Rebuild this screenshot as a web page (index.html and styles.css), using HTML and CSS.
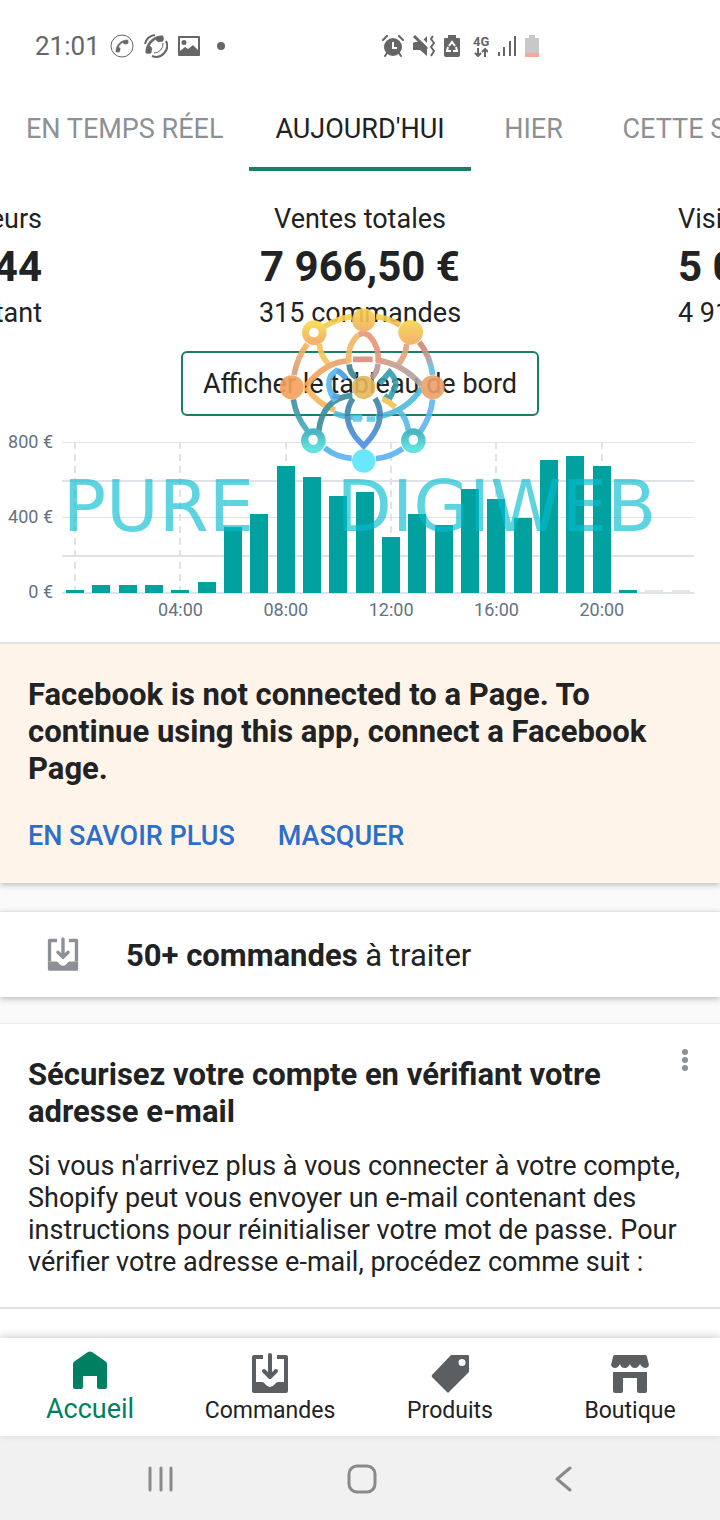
FILE: index.html
```
<!DOCTYPE html>
<html lang="fr">
<head>
<meta charset="UTF-8">
<meta name="viewport" content="width=device-width, initial-scale=1">
<title>Accueil</title>
<link rel="stylesheet" href="styles.css">
</head>
<body>

<!-- shared icons -->
<svg class="defs" width="0" height="0" aria-hidden="true">
	<symbol id="inbox" viewBox="0 0 38 40">
		<path d="M12 4H3V29M35 29V4H26" fill="none" stroke="currentColor" stroke-width="4" stroke-linejoin="round"/>
		<path d="M1 29H11Q13 29 14 31Q19 37 24 31Q25 29 27 29H37V38Q37 40 35 40H3Q1 40 1 38Z" fill="currentColor"/>
		<path d="M19 2V23M13 18L19 24L25 18" fill="none" stroke="currentColor" stroke-width="4" stroke-linecap="round" stroke-linejoin="round"/>
	</symbol>
	<symbol id="phone" viewBox="0 0 24 24">
		<path transform="rotate(90 12 12)" d="M6.62 10.79c1.44 2.83 3.76 5.14 6.59 6.59l2.2-2.2c.27-.27.67-.36 1.02-.24 1.12.37 2.33.57 3.57.57.55 0 1 .45 1 1V20c0 .55-.45 1-1 1-9.39 0-17-7.61-17-17 0-.55.45-1 1-1h3.5c.55 0 1 .45 1 1 0 1.25.2 2.45.57 3.57.11.35.03.74-.25 1.02l-2.2 2.2z" fill="currentColor" stroke="currentColor" stroke-width="1"/>
	</symbol>
</svg>

<header class="statusbar">
	<div class="statusLeft">
		<span class="clock">21:01</span>
		<svg width="24" height="24" viewBox="0 0 24 24">
			<circle cx="12" cy="12" r="11" fill="none" stroke="#666" stroke-width="1"/>
			<use href="#phone" x="4" y="4" width="16" height="16"/>
		</svg>
		<svg width="24" height="24" viewBox="0 0 24 24">
			<use href="#phone" x="-1" y="-1" width="23" height="23"/>
			<path d="M1 10A11 11 0 0 1 11 1M8 22A11 11 0 0 0 22 7" fill="none" stroke="#666" stroke-width="2"/>
			<path d="M10 19A9 9 0 0 0 19 9" fill="none" stroke="#666" stroke-width="1"/>
		</svg>
		<svg width="22" height="20" viewBox="0 0 22 20">
			<path fill-rule="evenodd" d="M1 0H21Q22 0 22 1V19Q22 20 21 20H1Q0 20 0 19V1Q0 0 1 0ZM2 2V15L7 11L10 13L15 9L20 14V2ZM6 4A2 2 0 1 1 6 9A2 2 0 1 1 6 4Z" fill="#666"/>
		</svg>
		<span class="dot"></span>
	</div>
	<div class="statusRight">
		<svg width="22" height="22" viewBox="0 0 22 22">
			<circle cx="11" cy="12" r="9" fill="#666"/>
			<path d="M1 5L5 1M21 5L17 1M5 18L3 21M17 18L19 21" stroke="#666" stroke-width="2" stroke-linecap="round"/>
			<path d="M11 7V13H15" fill="none" stroke="#fff" stroke-width="2"/>
		</svg>
		<svg width="22" height="22" viewBox="0 0 22 22">
			<path d="M0 8L2 7H8L14 1V21L7 15H0Z" fill="#666"/>
			<path d="M4 0L15 11" stroke="#fff" stroke-width="3"/>
			<path d="M1 1L14 14" stroke="#666" stroke-width="3"/>
			<path d="M20 1L18 4L21 8L18 12L21 16L18 21" fill="none" stroke="#666" stroke-width="2"/>
		</svg>
		<svg width="16" height="22" viewBox="0 0 16 22">
			<path d="M4 0H12V3H15Q16 3 16 4V20Q16 22 14 22H2Q0 22 0 20V4Q0 3 1 3H4Z" fill="#666"/>
			<path d="M5 11L8 7L11 11M12 12L13 16H9M7 16H3L4 12" fill="none" stroke="#fff" stroke-width="2"/>
		</svg>
		<span class="network">4G
			<svg width="14" height="9" viewBox="0 0 14 9"><path d="M4 0V8M1 5L4 8L7 5M11 9V1M8 4L11 1L14 4" fill="none" stroke="#666" stroke-width="2"/></svg>
		</span>
		<svg width="18" height="20" viewBox="0 0 18 20"><path d="M1 16V20M6 11V20M12 5V20M17 0V20" stroke="#666" stroke-width="2"/></svg>
		<svg width="14" height="22" viewBox="0 0 14 22"><path d="M4 0H10V3H14V18H0V3H4Z" fill="#c8c8c8"/><path d="M0 18H14V22H0Z" fill="#f6a993"/></svg>
	</div>
</header>

<nav class="tabs">
	<button type="button">EN TEMPS RÉEL</button>
	<button type="button" class="selected">AUJOURD'HUI</button>
	<button type="button">HIER</button>
	<button type="button">CETTE SEMAINE</button>
</nav>

<main>
<section class="dashboard">
	<div class="metrics">
		<div class="metric prev">
			<p>Visiteurs</p>
			<strong>44</strong>
			<p>à l'instant</p>
		</div>
		<div class="metric">
			<p>Ventes totales</p>
			<strong>7 966,50 €</strong>
			<p>315 commandes</p>
		</div>
		<div class="metric next">
			<p>Visites</p>
			<strong>5 044</strong>
			<p>4 911 visiteurs</p>
		</div>
	</div>
	<button type="button" class="openDashboard">Afficher le tableau de bord</button>

	<!-- hourly sales -->
	<div class="chart">
		<div class="yAxis"><span>800 €</span><span>400 €</span><span>0 €</span></div>
		<div class="plot">
			<div class="gridLines"><i></i><i></i><i></i><i></i></div>
			<div class="bars">
				<div class="hour tick"><i style="height:2%"></i></div>
				<div class="hour"><i style="height:5%"></i></div>
				<div class="hour"><i style="height:5%"></i></div>
				<div class="hour"><i style="height:5%"></i></div>
				<div class="hour tick"><i style="height:2%"></i></div>
				<div class="hour"><i style="height:7%"></i></div>
				<div class="hour"><i style="height:44%"></i></div>
				<div class="hour"><i style="height:52%"></i></div>
				<div class="hour tick"><i style="height:84%"></i></div>
				<div class="hour"><i style="height:77%"></i></div>
				<div class="hour"><i style="height:64%"></i></div>
				<div class="hour"><i style="height:67%"></i></div>
				<div class="hour tick"><i style="height:37%"></i></div>
				<div class="hour"><i style="height:52%"></i></div>
				<div class="hour"><i style="height:45%"></i></div>
				<div class="hour"><i style="height:69%"></i></div>
				<div class="hour tick"><i style="height:62%"></i></div>
				<div class="hour"><i style="height:50%"></i></div>
				<div class="hour"><i style="height:88%"></i></div>
				<div class="hour"><i style="height:91%"></i></div>
				<div class="hour tick"><i style="height:84%"></i></div>
				<div class="hour"><i style="height:2%"></i></div>
				<div class="hour empty"><i style="height:2%"></i></div>
				<div class="hour empty"><i style="height:2%"></i></div>
			</div>
		</div>
		<div class="xAxis"><span>04:00</span><span>08:00</span><span>12:00</span><span>16:00</span><span>20:00</span></div>
	</div>

	<!-- watermark -->
	<div class="watermark">
		<svg width="190" height="180" viewBox="-15 0 570 540">
			<defs>
				<linearGradient id="ring" gradientUnits="userSpaceOnUse" x1="0" y1="45" x2="0" y2="480">
					<stop offset="0" stop-color="#f8d648"/><stop offset=".25" stop-color="#f3ac60"/><stop offset=".44" stop-color="#c99a91"/><stop offset=".54" stop-color="#398597"/><stop offset=".8" stop-color="#45aebb"/><stop offset="1" stop-color="#5ab4fb"/>
				</linearGradient>
				<linearGradient id="ringRight" gradientUnits="userSpaceOnUse" x1="0" y1="45" x2="0" y2="480">
					<stop offset="0" stop-color="#f8d648"/><stop offset=".2" stop-color="#dc8069"/><stop offset=".3" stop-color="#b49c99"/><stop offset=".36" stop-color="#62bde6"/><stop offset="1" stop-color="#5aaff8"/>
				</linearGradient>
				<linearGradient id="petal" x1="0" y1="0" x2="0" y2="1">
					<stop offset="0" stop-color="#38849a"/><stop offset="1" stop-color="#4d8ee4"/>
				</linearGradient>
				<linearGradient id="sun" x1="0" y1="0" x2="0" y2="1">
					<stop offset="0" stop-color="#f8d64e"/><stop offset="1" stop-color="#f4ab5d"/>
				</linearGradient>
				<linearGradient id="sea" x1="0" y1="0" x2="0" y2="1">
					<stop offset="0" stop-color="#39aebd"/><stop offset="1" stop-color="#51e2dc"/>
				</linearGradient>
				<linearGradient id="lid" x1="0" y1="0" x2="1" y2="0">
					<stop offset="0" stop-color="#f5a653"/><stop offset=".5" stop-color="#e89877"/><stop offset="1" stop-color="#a6a3a2"/>
				</linearGradient>
			</defs>
			<g fill="none" stroke-width="17">
				<path d="M245 50Q200 56 163 80M112 132Q82 170 72 225M70 298Q78 350 112 392M164 444Q200 472 245 475" stroke="url(#ring)"/>
				<path d="M318 50Q355 54 390 75M448 126Q482 172 488 225M488 298Q482 350 452 394M398 446Q360 472 318 476" stroke="url(#ringRight)"/>
				<path d="M148 132Q150 164 175 192" stroke="#f5c557"/>
				<path d="M410 132Q408 165 384 195" stroke="#dda57b"/>
				<path d="M108 258Q165 185 239 182M318 181Q394 187 455 256" stroke="url(#lid)"/>
				<path d="M108 262Q145 314 195 330" stroke="#f4b55b"/>
				<path d="M192 339Q232 356 277 351M318 352Q410 335 455 264" stroke="#4bbbdc"/>
				<path d="M266 104Q230 137 237 188" stroke="#f2b862"/>
				<path d="M237 193Q240 220 258 232" stroke="#3e8291"/>
				<path d="M266 104L281 99L298 107Q328 138 325 188" stroke="#e5967a"/>
				<path d="M324 192Q322 218 304 234" stroke="#b69998"/>
				<path d="M146 394Q158 293 247 286" stroke="#398b99"/>
				<path d="M249 295Q212 349 257 412L281 438L302 414Q351 350 315 295" stroke="url(#petal)"/>
				<path d="M388 334Q409 353 415 390" stroke="#55bce6"/>
				<path d="M204 208L183 226Q166 259 196 303" stroke="#56b7ee"/>
				<path d="M201 212Q213 215 229 237M188 286L207 292" stroke="#479bdf"/>
				<path d="M329 251L359 216Q379 236 377 258L357 299L343 286" stroke="#359eae"/>
				<path d="M337 296L356 306L376 322" stroke="#efc450"/>
				<path d="M249 178H308" stroke="#da8d78"/>
				<path d="M249 357H275M290 357H316" stroke="#58cce5"/>
			</g>
			<circle cx="281" cy="60" r="35" fill="url(#sun)"/>
			<circle cx="422" cy="97" r="37" fill="url(#sun)"/>
			<circle cx="65" cy="262" r="36" fill="#f5a15d"/>
			<circle cx="488" cy="262" r="36" fill="#eda067"/>
			<circle cx="281" cy="262" r="35" fill="#e5b759"/>
			<circle cx="281" cy="483" r="35" fill="#5ae5fa"/>
			<circle cx="133" cy="98" r="25" fill="none" stroke="url(#sun)" stroke-width="24"/>
			<circle cx="130" cy="422" r="25" fill="none" stroke="url(#sea)" stroke-width="24"/>
			<circle cx="430" cy="422" r="25" fill="none" stroke="url(#sea)" stroke-width="24"/>
			<g fill="#fff"><circle cx="131" cy="98" r="14"/><circle cx="129" cy="418" r="14"/><circle cx="430" cy="418" r="14"/></g>
		</svg>
		<div class="wordmark"><span>PURE</span> <span>DIGIWEB</span></div>
	</div>
</section>

<section class="alert">
	<h2>Facebook is not connected to a Page. To continue using this app, connect a Facebook Page.</h2>
	<div class="actions">
		<a href="#">EN SAVOIR PLUS</a>
		<a href="#">MASQUER</a>
	</div>
</section>

<a href="#" class="orders">
	<svg width="32" height="34"><use href="#inbox"/></svg>
	<span><b>50+ commandes</b> à traiter</span>
</a>

<section class="secure">
	<div class="secureText">
		<h2>Sécurisez votre compte en vérifiant votre adresse e-mail</h2>
		<button type="button" class="more" aria-label="Plus d'options"><i></i><i></i><i></i></button>
		<p>Si vous n'arrivez plus à vous connecter à votre compte, Shopify peut vous envoyer un e-mail contenant des instructions pour réinitialiser votre mot de passe. Pour vérifier votre adresse e-mail, procédez comme suit :</p>
	</div>
</section>
</main>

<nav class="bottomNav">
	<a href="#" class="active">
		<svg width="36" height="38" viewBox="0 0 36 38"><path d="M16 1Q18 0 20 1L33 10Q35 11 35 13V36Q35 38 33 38H27Q25 38 25 36V25H11V36Q11 38 9 38H3Q1 38 1 36V13Q1 11 3 10Z" fill="currentColor"/></svg>
		<span>Accueil</span>
	</a>
	<a href="#">
		<svg width="38" height="40"><use href="#inbox"/></svg>
		<span>Commandes</span>
	</a>
	<a href="#">
		<svg width="38" height="38" viewBox="0 0 38 38"><path fill-rule="evenodd" d="M20 0H37Q38 0 38 1V17L18 37Q17 38 16 37L1 22Q0 21 1 20ZM31 4A3 3 0 1 0 31 11A3 3 0 1 0 31 4Z" fill="currentColor"/></svg>
		<span>Produits</span>
	</a>
	<a href="#">
		<svg width="38" height="38" viewBox="0 0 38 38"><path d="M4 0H34Q36 0 36 2L38 10Q37 13 35 13Q31 13 29 9Q27 13 24 13Q20 13 19 9Q17 13 14 13Q10 13 9 9Q7 13 4 13Q1 13 0 10L2 2Q2 0 4 0ZM2 17H36V36Q36 38 34 38H28Q26 38 26 36V23H12V36Q12 38 10 38H4Q2 38 2 36Z" fill="currentColor"/></svg>
		<span>Boutique</span>
	</a>
</nav>

<footer class="systemNav">
	<button type="button" aria-label="Applications récentes"><svg width="28" height="28" viewBox="0 0 28 28"><path d="M3 3V25M14 3V25M24 3V25"/></svg></button>
	<button type="button" aria-label="Écran d'accueil"><svg width="30" height="30" viewBox="0 0 30 30"><rect x="2" y="2" width="26" height="26" rx="8"/></svg></button>
	<button type="button" aria-label="Retour"><svg width="18" height="28" viewBox="0 0 18 28"><path d="M16 3L3 14L16 25"/></svg></button>
</footer>

</body>
</html>
```
FILE: styles.css
```
* {
	box-sizing: border-box;
}
html, body {
	margin: 0;
	padding: 0;
}
body {
	display: flex;
	flex-direction: column;
	min-height: 100vh;
	overflow-x: hidden;
	background: #fff;
	color: #202223;
	font-family: Roboto, "Liberation Sans", sans-serif;
	font-size: 27px;
	line-height: 32px;
}
h2, p {
	margin: 0;
}
a {
	color: inherit;
	text-decoration: none;
}
button {
	margin: 0;
	padding: 0;
	border: none;
	background: none;
	color: inherit;
	font: inherit;
	cursor: pointer;
}
svg {
	display: block;
	flex: none;
}
.defs {
	position: absolute;
}

/* status bar */
.statusbar {
	display: grid;
	grid-template-columns: 347px 1fr;
	align-items: center;
	height: 92px;
	padding-left: 35px;
	color: #666;
}
.statusLeft, .statusRight {
	display: flex;
	align-items: center;
	gap: 10px;
}
.statusRight {
	gap: 9px;
}
.clock {
	font-size: 26px;
}
.dot {
	width: 8px;
	height: 8px;
	margin-left: 7px;
	border-radius: 50%;
	background: #666;
}
.network {
	display: flex;
	flex-direction: column;
	align-items: center;
	margin-left: 4px;
	font-size: 13px;
	font-weight: 700;
	line-height: 13px;
}

/* tabs */
.tabs {
	display: flex;
	height: 79px;
	overflow: hidden;
	color: #8c9196;
}
.tabs button {
	flex: none;
	min-width: 126px;
	padding: 0 26px 1px;
	border-bottom: 4px solid transparent;
	white-space: nowrap;
}
.tabs .selected {
	border-color: #1a7f64;
	color: #202223;
}

/* totals and chart */
.dashboard {
	position: relative;
	padding-bottom: 22px;
	background: #fff;
}
.metrics {
	display: grid;
	grid-template-columns: 42px 1fr 42px;
	padding-top: 32px;
	overflow: hidden;
	white-space: nowrap;
}
.metric {
	display: flex;
	flex-direction: column;
	align-items: center;
}
.metric strong {
	padding-top: 2px;
	font-size: 42px;
	line-height: 60px;
}
.prev {
	align-items: flex-end;
}
.next {
	align-items: flex-start;
}
.openDashboard {
	display: block;
	height: 65px;
	margin: 22px auto 0;
	padding: 1px 20px 0;
	border: 2px solid #1a7f64;
	border-radius: 6px;
}
.chart {
	display: grid;
	grid-template-columns: 53px 1fr;
	column-gap: 9px;
	padding: 16px 26px 0 0;
	color: #637381;
	font-size: 18px;
	line-height: 20px;
}
.yAxis {
	display: flex;
	flex-direction: column;
	justify-content: space-between;
	height: 170px;
	text-align: right;
}
.plot {
	position: relative;
	height: 152px;
	margin-top: 10px;
	border-bottom: 2px solid #dfe3e8;
}
.gridLines {
	display: grid;
	grid-template-rows: repeat(4, 1fr);
	height: 100%;
}
.gridLines i {
	border-top: 1px solid #dfe3e8;
}
.gridLines i:nth-child(even) {
	border-top-width: 2px;
}
.bars {
	position: absolute;
	inset: 0 0 -1px;
	display: grid;
	grid-template-columns: repeat(24, 1fr);
}
.hour {
	display: flex;
	align-items: flex-end;
	justify-content: center;
}
.hour i {
	width: 18px;
	background: #00a19f;
}
.tick {
	background: repeating-linear-gradient(#dfe3e8 0 7px, transparent 7px 12px) center / 2px 100% no-repeat;
}
.empty i {
	background: #e4e5e7;
}
.xAxis {
	grid-column: 2;
	display: grid;
	grid-template-columns: repeat(24, 1fr);
	margin-top: -2px;
	text-align: center;
}
.xAxis span { grid-column: 4 / span 3; }
.xAxis span:nth-child(2) { grid-column-start: 8; }
.xAxis span:nth-child(3) { grid-column-start: 12; }
.xAxis span:nth-child(4) { grid-column-start: 16; }
.xAxis span:nth-child(5) { grid-column-start: 20; }

/* watermark laid over the totals and the chart */
.watermark {
	position: absolute;
	inset: 129px 35px auto;
	display: flex;
	flex-direction: column;
	align-items: center;
	opacity: 0.9;
	pointer-events: none;
}
.wordmark {
	display: grid;
	grid-template-columns: 38fr 58fr;
	column-gap: 26px;
	width: 100%;
	color: #04bdd1;
	font-family: "DejaVu Sans", sans-serif;
	font-size: 72px;
	line-height: 52px;
	text-align: center;
	opacity: 0.7;
}

/* cards */
.alert {
	padding: 32px 28px 31px;
	border-top: 2px solid #e1e3e5;
	background: #fff4ea;
	box-shadow: 0 2px 6px rgba(0, 0, 0, 0.25);
}
h2 {
	font-size: 31px;
	line-height: 37px;
}
.alert h2 {
	font-size: 31px;
}
.actions {
	display: flex;
	gap: 43px;
	margin-top: 33px;
	color: #2c6ecb;
	font-weight: 500;
}
main {
	flex: 1;
	display: flex;
	flex-direction: column;
	background: #fafafa;
}
.orders {
	display: flex;
	align-items: center;
	gap: 47px;
	height: 86px;
	margin: 28px 0 26px;
	padding: 2px 47px 0;
	border-top: 1px solid #e1e3e5;
	background: #fff;
	box-shadow: 0 2px 6px rgba(0, 0, 0, 0.25);
	font-size: 31px;
}
.orders svg {
	margin-bottom: 3px;
	color: #8c9196;
}
.secure {
	flex: 1;
	border-top: 1px solid #ebebeb;
	background: #fff;
}
.secureText {
	position: relative;
	padding: 32px 28px 29px;
	border-bottom: 2px solid #e1e3e5;
}
.secure h2 {
	padding-right: 60px;
}
.secure p {
	margin-top: 20px;
}
.more {
	position: absolute;
	top: 25px;
	right: 32px;
	display: grid;
	gap: 2px;
}
.more i {
	width: 6px;
	height: 6px;
	border-radius: 50%;
	background: #8c9196;
}

/* bottom navigation */
.bottomNav {
	position: relative;
	display: grid;
	grid-template-columns: repeat(4, 1fr);
	height: 98px;
	background: #fff;
	box-shadow: 0 -2px 8px rgba(0, 0, 0, 0.18);
	font-size: 23px;
}
.bottomNav a {
	display: flex;
	flex-direction: column;
	align-items: center;
	justify-content: flex-end;
	gap: 2px;
	padding-bottom: 9px;
}
.bottomNav svg {
	color: #5c5f62;
}
.bottomNav .active, .bottomNav .active svg {
	color: #008060;
}
.bottomNav .active {
	gap: 4px;
	padding-bottom: 11px;
	font-size: 27px;
}
.systemNav {
	display: grid;
	grid-template-columns: repeat(3, 1fr);
	height: 84px;
	padding: 2px 56px 0 60px;
	background: #f1f1f1;
}
.systemNav button {
	display: flex;
	align-items: center;
	justify-content: center;
}
.systemNav svg {
	fill: none;
	stroke: #8a8a8a;
	stroke-width: 3;
	stroke-linecap: round;
	stroke-linejoin: round;
}
```
